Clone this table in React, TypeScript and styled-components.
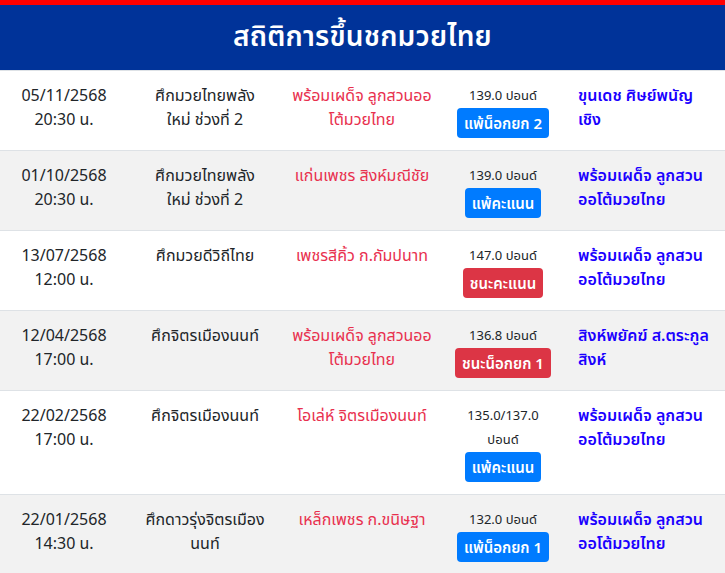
import React from 'react';
import styled, { createGlobalStyle } from 'styled-components';

const GlobalStyle = createGlobalStyle`
  html, body {
    margin: 0;
    padding: 0;
    background: #ffffff;
  }
  body {
    font-family: "Noto Sans", "Noto Sans Thai", "DejaVu Sans", sans-serif;
    color: #212529;
  }
`;

const Page = styled.div`
  width: 725px;
`;

const Header = styled.header`
  background: #003399;
  border-top: 5px solid #ff0000;
  height: 65px;
  display: flex;
  align-items: center;
  justify-content: center;
`;

const Title = styled.h1`
  margin: 0;
  color: #ffffff;
  font-size: 28px;
  font-weight: 600;
  letter-spacing: 0.2px;
`;

const Table = styled.table`
  width: 100%;
  table-layout: fixed;
  border-collapse: collapse;
  font-size: 16px;
  line-height: 24px;
`;

const Row = styled.tr<{ $striped?: boolean }>`
  background: ${(p) => (p.$striped ? '#f2f2f2' : '#ffffff')};
  border-top: 1px solid #dee2e6;
`;

const Cell = styled.td<{ $width: number; $align?: string; $color?: string; $bold?: boolean }>`
  box-sizing: border-box;
  width: ${(p) => p.$width}px;
  padding: 12px 6px 12px ${(p) => (p.$align === 'left' ? 14 : 6)}px;
  vertical-align: top;
  text-align: ${(p) => p.$align || 'center'};
  color: ${(p) => p.$color || '#212529'};
  font-weight: ${(p) => (p.$bold ? 600 : 400)};
`;

const Line = styled.div`
  white-space: nowrap;
`;

const Weight = styled.div`
  font-size: 13px;
  line-height: 24px;
  white-space: nowrap;
`;

const Badge = styled.span<{ $win?: boolean }>`
  display: inline-block;
  background: ${(p) => (p.$win ? '#dc3545' : '#007bff')};
  color: #ffffff;
  font-size: 15px;
  font-weight: 600;
  line-height: 24px;
  padding: 3px 7px;
  border-radius: 4px;
  margin-top: 1px;
  white-space: nowrap;
`;

type Fight = {
  date: string;
  time: string;
  event: string[];
  corner: string[];
  weight: string[];
  result: string;
  win: boolean;
  opponent: string[];
};

const fights: Fight[] = [
  {
    date: '05/11/2568',
    time: '20:30 น.',
    event: ['ศึกมวยไทยพลัง', 'ใหม่ ช่วงที่ 2'],
    corner: ['พร้อมเผด็จ ลูกสวนออ', 'โต้มวยไทย'],
    weight: ['139.0 ปอนด์'],
    result: 'แพ้น็อกยก 2',
    win: false,
    opponent: ['ขุนเดช ศิษย์พนัญ', 'เชิง'],
  },
  {
    date: '01/10/2568',
    time: '20:30 น.',
    event: ['ศึกมวยไทยพลัง', 'ใหม่ ช่วงที่ 2'],
    corner: ['แก่นเพชร สิงห์มณีชัย'],
    weight: ['139.0 ปอนด์'],
    result: 'แพ้คะแนน',
    win: false,
    opponent: ['พร้อมเผด็จ ลูกสวน', 'ออโต้มวยไทย'],
  },
  {
    date: '13/07/2568',
    time: '12:00 น.',
    event: ['ศึกมวยดีวิถีไทย'],
    corner: ['เพชรสีคิ้ว ก.กัมปนาท'],
    weight: ['147.0 ปอนด์'],
    result: 'ชนะคะแนน',
    win: true,
    opponent: ['พร้อมเผด็จ ลูกสวน', 'ออโต้มวยไทย'],
  },
  {
    date: '12/04/2568',
    time: '17:00 น.',
    event: ['ศึกจิตรเมืองนนท์'],
    corner: ['พร้อมเผด็จ ลูกสวนออ', 'โต้มวยไทย'],
    weight: ['136.8 ปอนด์'],
    result: 'ชนะน็อกยก 1',
    win: true,
    opponent: ['สิงห์พยัคฆ์ ส.ตระกูล', 'สิงห์'],
  },
  {
    date: '22/02/2568',
    time: '17:00 น.',
    event: ['ศึกจิตรเมืองนนท์'],
    corner: ['โอเล่ห์ จิตรเมืองนนท์'],
    weight: ['135.0/137.0', 'ปอนด์'],
    result: 'แพ้คะแนน',
    win: false,
    opponent: ['พร้อมเผด็จ ลูกสวน', 'ออโต้มวยไทย'],
  },
  {
    date: '22/01/2568',
    time: '14:30 น.',
    event: ['ศึกดาวรุ่งจิตรเมือง', 'นนท์'],
    corner: ['เหล็กเพชร ก.ขนิษฐา'],
    weight: ['132.0 ปอนด์'],
    result: 'แพ้น็อกยก 1',
    win: false,
    opponent: ['พร้อมเผด็จ ลูกสวน', 'ออโต้มวยไทย'],
  },
];

const lines = (items: string[]) => items.map((t, i) => <Line key={i}>{t}</Line>);

export default function App() {
  return (
    <Page>
      <GlobalStyle />
      <Header>
        <Title>สถิติการขึ้นชกมวยไทย</Title>
      </Header>
      <Table>
        <tbody>
          {fights.map((f, i) => (
            <Row key={i} $striped={i % 2 === 1}>
              <Cell $width={128}>{lines([f.date, f.time])}</Cell>
              <Cell $width={154}>{lines(f.event)}</Cell>
              <Cell $width={160} $color="#e8304e">
                {lines(f.corner)}
              </Cell>
              <Cell $width={122}>
                {f.weight.map((w, j) => (
                  <Weight key={j}>{w}</Weight>
                ))}
                <Badge $win={f.win}>{f.result}</Badge>
              </Cell>
              <Cell $width={161} $align="left" $color="#1a00ff" $bold>
                {lines(f.opponent)}
              </Cell>
            </Row>
          ))}
        </tbody>
      </Table>
    </Page>
  );
}
